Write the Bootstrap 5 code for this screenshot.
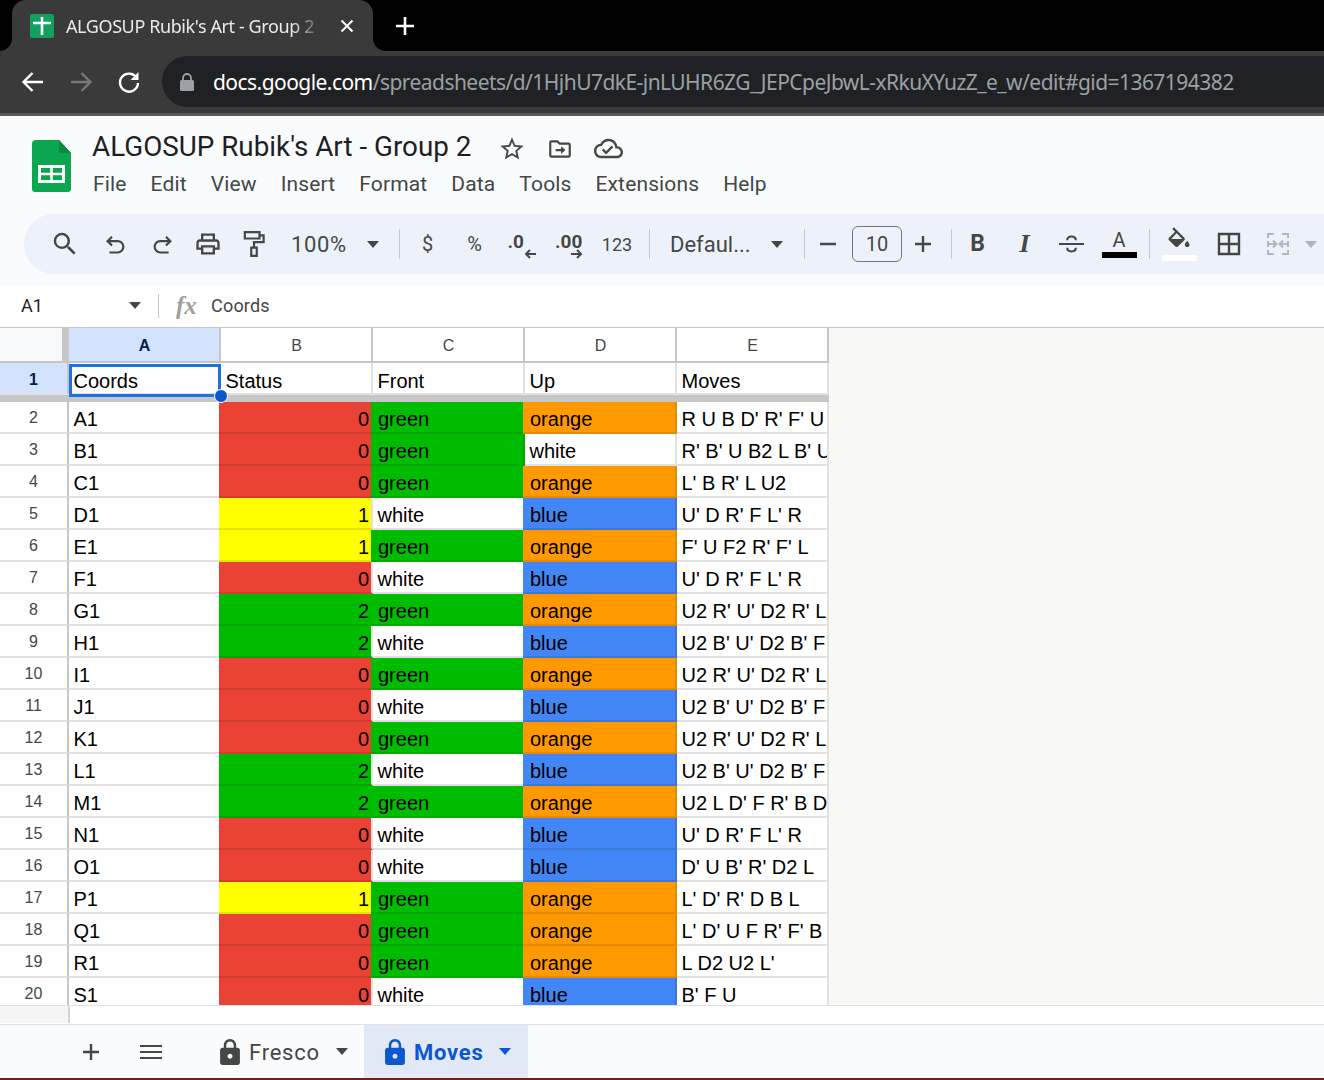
<!DOCTYPE html>
<html lang="en">
<head>
  <meta charset="UTF-8" />
  <title>ALGOSUP Rubik's Art - Group 2</title>
  <link href="https://cdn.jsdelivr.net/npm/bootstrap@5.3.0/dist/css/bootstrap.min.css" rel="stylesheet" />
  <style>
    html, body { height: 1080px; overflow: hidden; background: #fff; }
    body { font-family: Roboto, "Liberation Sans", sans-serif; color: #444746; }

    /* browser chrome */
    .tab-strip { height: 51px; background: #000; padding-left: 12px; }
    .chrome-tab { width: 361px; height: 51px; background: #3a3a3a; border-radius: 14px 14px 0 0; padding-left: 18px; position: relative; }
    .chrome-tab::before, .chrome-tab::after { content: ""; position: absolute; bottom: 0; width: 12px; height: 12px; }
    .chrome-tab::before { left: -12px; background: radial-gradient(circle at 0 0, #000 11.5px, #3a3a3a 12px); }
    .chrome-tab::after { right: -12px; background: radial-gradient(circle at 100% 0, #000 11.5px, #3a3a3a 12px); }
    .tab-title { width: 250px; margin-left: 12px; font: 18px "Noto Sans", sans-serif; letter-spacing: -.4px; color: #e8eaed; white-space: nowrap; overflow: hidden; -webkit-mask-image: linear-gradient(to right, #000 90%, rgba(0, 0, 0, .25) 100%); }
    .tab-close { margin-left: 24px; }
    .tab-plus { margin-left: 23px; }
    .addr-row { height: 65px; background: #3a3a3a; border-bottom: 3px solid #5a5a5a; padding-left: 20px; }
    .nav-ico { width: 48px; }
    .addr-pill { margin-left: -2px; flex: 1; height: 51px; margin-top: -1px; background: #202124; border-radius: 26px 0 0 26px; padding-left: 18px; font: 21px "Noto Sans", sans-serif; letter-spacing: -.55px; white-space: nowrap; overflow: hidden; color: #9aa0a6; }
    .addr-host { color: #fff; }
    .addr-lock { margin-right: 19px; flex: none; }

    /* docs header */
    .app-head { height: 170px; background: #f9fbfd; }
    .title-row { height: 98px; padding-left: 32px; padding-top: 24px; }
    .doc-logo { flex: none; margin-right: 21px; }
    .title-block { margin-top: -10px; }
    .doc-title { font-size: 27.8px; line-height: 34px; color: #1f1f1f; height: 34px; }
    .doc-icons { margin-left: 27px; gap: 21px; padding-top: 3px; }
    .menu-row { gap: 24px; font-size: 21px; line-height: 28px; color: #444746; margin-top: 6px; margin-left: 1px; letter-spacing: .14px; }
    .tool-pill { margin-left: 24px; height: 60px; background: #edf2fa; border-radius: 30px 0 0 30px; padding-left: 17px; overflow: hidden; white-space: nowrap; font-size: 22px; }
    .tb { height: 60px; flex: none; }
    .w34 { width: 34px; } .w47 { width: 47px; } .w48 { width: 48px; } .w46 { width: 46px; }
    .tb-sep { width: 1px; height: 30px; background: #c7c7c7; flex: none; }
    .tb-zoom { width: 122px; padding-left: 14px; letter-spacing: .6px; }
    .tb-font { width: 148px; padding-left: 14px; margin-left: 6px; }
    .caret-down { width: 0; height: 0; border-left: 6.5px solid transparent; border-right: 6.5px solid transparent; border-top: 7px solid currentColor; flex: none; }
    .tb-zoom .caret-down { margin-left: 20px; }
    .tb-font .caret-down { margin-left: 20px; }
    .size-box { width: 50px; height: 36px; border: 1px solid #747775; border-radius: 6px; flex: none; font-size: 20px; }
    .t-sym { font-size: 20px; }
    .t-num { font-size: 18px; }
    .t-dec { font-size: 19px; font-weight: 700; line-height: 15px; }
    .dec-stack { line-height: 1; padding-top: 4px; }
    .t-bold { font-size: 23px; font-weight: 700; }
    .t-ital { font: italic 700 26px "Liberation Serif", serif; }
    .t-color { font-size: 20px; line-height: 18px; }
    .swatch-bar { width: 35px; height: 6px; margin-top: 3px; }
    .bar-black { background: #000; }
    .bar-white { background: #fff; }
    .mg2 { margin-left: 2px; } .mg5 { margin-left: 5px; } .mg6 { margin-left: 6px; } .mg7 { margin-left: 7px; } .mg11 { margin-left: 11px; }
    .nudge { padding-top: 2px; }

    /* formula bar */
    .fx-row { height: 41px; background: #fff; padding-left: 21px; font-size: 18px; color: #1f1f1f; }
    .fx-row > * { margin-top: -2px; }
    .name-box { width: 108px; }
    .fx-caret { color: #444746; margin-right: 17px; }
    .fx-sep { width: 1px; height: 24px; background: #c7c7c7; margin-right: 17px; }
    .fx-mark { font: italic 700 25px "Liberation Serif", serif; color: #a0a0a0; width: 35px; }
    .fx-text { color: #444746; letter-spacing: .2px; }

    /* sheet */
    .sheet-wrap { height: 678px; background: #f8f9f6; position: relative; overflow: hidden; border-top: 1px solid #c4c7c5; }
    .sheet-grid { display: grid; grid-template-columns: 69px repeat(5, 152px); grid-template-rows: 35px 32px 7px repeat(19, 32px); width: 829px; font-family: "Liberation Sans", Arial, sans-serif; font-size: 20px; color: #000; background: #fff; }
    .cell { border-right: 2px solid #e1e1e1; border-bottom: 2px solid #e1e1e1; padding: 3px 5px 0 4.5px; line-height: 29px; white-space: nowrap; overflow: hidden; }
    .head-cell { padding-top: 4px; }
    .col-h { border-color: #c4c7c5; font-size: 16px; color: #444746; display: flex; align-items: center; justify-content: center; padding: 2px 0 0 1px; }
    .col-h.on { background: #d3e3fd; color: #041e49; font-weight: 700; }
    .corner { background: #f8f9fa; border-bottom: 2px solid #c4c7c5; border-right: 7px solid #c7c7c7; }
    .row-h { border-color: #c4c7c5; border-bottom-color: #e1e1e1; font-size: 16px; color: #444746; padding: 1px 0 0 0; text-align: center; line-height: 29px; }
    .row-h.on { background: #d3e3fd; color: #041e49; font-weight: 700; padding-top: 2px; }
    .freeze { grid-column: 1 / 7; background: #c7c7c7; }
    .fill { margin-left: -2px; padding-left: 7px; border-color: rgba(0, 0, 0, .1); position: relative; }
    .num-cell { text-align: right; padding-right: 2px; border-right-color: #e1e1e1; }
    .c-red { background: #ea4335; }
    .c-green { background: #00bc00; }
    .c-yellow { background: #ffff00; }
    .c-orange { background: #ff9900; }
    .c-blue { background: #4285f4; }
    .sel-box { position: absolute; left: 69px; top: 36px; width: 152px; height: 33px; border: 3px solid #1a73e8; pointer-events: none; }
    .sel-dot { position: absolute; left: 214px; top: 61px; width: 14px; height: 14px; border-radius: 50%; background: #0b57d0; border: 1px solid #fff; }

    /* bottom */
    .pad-row { height: 19px; background: #fff; border-top: 1px solid #e1e1e1; }
    .pad-corner { width: 70px; height: 17px; background: #f5f5f5; border-right: 2px solid #d5d5d5; }
    .sheet-tabs { height: 54px; background: #f9fbfd; border-top: 1px solid #e1e3e1; font-size: 22px; letter-spacing: .75px; padding-left: 80px; }
    .s-menu { margin-left: 38px; }
    .s-tab { height: 53px; }
    .s-tab span { padding-top: 2px; }
    .tab-fresco { width: 202px; padding-left: 58px; color: #444746; }
    .tab-moves { width: 164px; padding-left: 21px; background: #e1e9f7; color: #0b57d0; font-weight: 700; }
    .s-tab svg { margin-right: 9px; flex: none; }
    .s-tab .caret-down { margin-left: 16px; padding: 0; }
    .foot-line { height: 2px; background: #7c1a1a; }
  </style>
</head>
<body>
  <div class="tab-strip d-flex align-items-start">
    <div class="chrome-tab d-flex align-items-center">
      <svg width="24" height="24" viewBox="0 0 24 24"><rect width="24" height="24" rx="2" fill="#12a05c"/><path d="M3 9h18M12 3v18" stroke="#fff" stroke-width="2.600" fill="none"/></svg>
      <div class="tab-title">ALGOSUP Rubik's Art - Group 2</div>
      <svg class="tab-close" width="14" height="14" viewBox="0 0 14 14"><path d="M1.500 1.500l11 11M12.500 1.500l-11 11" stroke="#fff" stroke-width="2"/></svg>
    </div>
    <svg class="tab-plus align-self-center" width="18" height="18" viewBox="0 0 18 18"><path d="M9 0v18M0 9h18" stroke="#fff" stroke-width="2.600"/></svg>
  </div>

  <div class="addr-row d-flex align-items-center">
    <div class="nav-ico"><svg width="26" height="26" viewBox="0 0 26 26"><path d="M23 13H4M12.500 4L3.500 13l9 9" stroke="#fff" stroke-width="2.400" fill="none"/></svg></div>
    <div class="nav-ico"><svg width="26" height="26" viewBox="0 0 26 26"><path d="M3 13h19M13.500 4l9 9-9 9" stroke="#777" stroke-width="2.400" fill="none"/></svg></div>
    <div class="nav-ico"><svg width="26" height="26" viewBox="0 0 26 26"><path d="M21 9.500A9 9 0 1 0 22 14" stroke="#fff" stroke-width="2.400" fill="none"/><path d="M22.500 3v8h-8z" fill="#fff"/></svg></div>
    <div class="addr-pill d-flex align-items-center">
      <svg class="addr-lock" width="14" height="18" viewBox="0 0 14 18"><path d="M3 7V5a4 4 0 0 1 8 0v2" stroke="#9aa0a6" stroke-width="1.800" fill="none"/><rect y="7" width="14" height="11" rx="1.500" fill="#9aa0a6"/></svg>
      <span><span class="addr-host">docs.google.com</span>/spreadsheets/d/1HjhU7dkE-jnLUHR6ZG_JEPCpeJbwL-xRkuXYuzZ_e_w/edit#gid=1367194382</span>
    </div>
  </div>

  <div class="app-head">
    <div class="title-row d-flex align-items-start">
      <svg class="doc-logo" width="39" height="52" viewBox="0 0 39 52"><path d="M4 0h23l12 13v36a3 3 0 0 1-3 3H3a3 3 0 0 1-3-3V4a4 4 0 0 1 4-4z" fill="#0ca650"/><path d="M27 0l12 13H27z" fill="#0a8a42"/><path d="M6 25h27v18H6z" fill="#fff"/><path d="M9 28h9.200v4.800H9zM20.800 28H30v4.800h-9.200zM9 35.200h9.200V40H9zM20.800 35.200H30V40h-9.200z" fill="#0ca650"/></svg>
      <div class="title-block">
        <div class="d-flex align-items-center">
          <div class="doc-title">ALGOSUP Rubik's Art - Group 2</div>
          <div class="doc-icons d-flex align-items-center">
            <svg width="28" height="28" viewBox="0 0 24 24" fill="#444746"><path d="M22 9.240l-7.190-.62L12 2 9.190 8.630 2 9.240l5.460 4.730L5.820 21 12 17.270 18.180 21l-1.630-7.030L22 9.240zM12 15.400l-3.760 2.270 1-4.280-3.320-2.880 4.380-.38L12 6.100l1.710 4.040 4.380.38-3.320 2.880 1 4.280L12 15.400z"/></svg>
            <svg width="26" height="26" viewBox="0 0 24 24" fill="#444746"><path d="M20 6h-8l-2-2H4c-1.100 0-2 .9-2 2v12c0 1.100.9 2 2 2h16c1.100 0 2-.9 2-2V8c0-1.100-.9-2-2-2zm0 12H4V6h5.200l2 2H20v10z"/><path d="M8 12h5V9.500l4 3.500-4 3.500V14H8z"/></svg>
            <svg width="29" height="29" viewBox="0 0 24 24" fill="#444746"><path d="M19.350 10.040C18.670 6.590 15.640 4 12 4 9.110 4 6.600 5.640 5.350 8.040 2.340 8.360 0 10.910 0 14c0 3.310 2.690 6 6 6h13c2.760 0 5-2.240 5-5 0-2.640-2.050-4.780-4.650-4.960zM19 18H6c-2.210 0-4-1.790-4-4 0-2.050 1.530-3.760 3.560-3.970l1.070-.11.5-.95C8.080 7.140 9.940 6 12 6c2.620 0 4.880 1.860 5.390 4.430l.3 1.500 1.530.11c1.560.1 2.780 1.410 2.780 2.960 0 1.650-1.350 3-3 3zm-9-3.820l-2.090-2.090L6.500 13.500 10 17l6.010-6.010-1.410-1.410z"/></svg>
          </div>
        </div>
        <div class="menu-row d-flex">
          <span>File</span><span>Edit</span><span>View</span><span>Insert</span><span>Format</span><span>Data</span><span>Tools</span><span>Extensions</span><span>Help</span>
        </div>
      </div>
    </div>

    <div class="tool-pill d-flex align-items-center">
      <div class="tb w48 d-flex align-items-center justify-content-center"><svg width="30" height="30" viewBox="0 0 24 24" fill="#444746"><path d="M15.500 14h-.79l-.28-.27A6.471 6.471 0 0 0 16 9.500 6.500 6.500 0 1 0 9.500 16c1.610 0 3.090-.59 4.230-1.570l.27.28v.79l5 4.990L20.490 19l-4.990-5zm-6 0C7.010 14 5 11.990 5 9.500S7.010 5 9.500 5 14 7.010 14 9.500 11.990 14 9.500 14z"/></svg></div>
      <div class="tb w48 d-flex align-items-center justify-content-center nudge"><svg class="ms-1" width="21" height="21" viewBox="0 0 24 24" fill="none" stroke="#444746" stroke-width="2.500"><path d="M8 2L3 7l5 5"/><path d="M3 7h11.500a6.500 6.500 0 0 1 0 13H5"/></svg></div>
      <div class="tb w47 d-flex align-items-center justify-content-center nudge"><svg class="ms-1" width="21" height="21" viewBox="0 0 24 24" fill="none" stroke="#444746" stroke-width="2.500"><path d="M16 2l5 5-5 5"/><path d="M21 7H9.500a6.500 6.500 0 0 0 0 13H19"/></svg></div>
      <div class="tb w47 d-flex align-items-center justify-content-center"><svg width="28" height="28" viewBox="0 0 24 24" fill="#444746"><path d="M19 8h-1V3H6v5H5c-1.660 0-3 1.340-3 3v6h4v4h12v-4h4v-6c0-1.660-1.340-3-3-3zM8 5h8v3H8V5zm8 14H8v-4h8v4zm4-4h-2v-2H6v2H4v-4c0-.55.45-1 1-1h14c.55 0 1 .45 1 1v4z"/></svg></div>
      <div class="tb w46 d-flex align-items-center justify-content-center"><svg width="22" height="28" viewBox="0 0 24 30" fill="none" stroke="#444746" stroke-width="2.400"><path d="M2 2h16v7H2zM18 5.500h4.500v7.500H12v6"/><path d="M9 19h6v9H9z"/></svg></div>
      <div class="tb tb-zoom d-flex align-items-center"><span>100%</span><span class="caret-down"></span></div>
      <div class="tb-sep"></div>
      <div class="tb w47 d-flex align-items-center justify-content-center t-sym ms-1">$</div>
      <div class="tb w47 d-flex align-items-center justify-content-center t-sym">%</div>
      <div class="tb w47 d-flex align-items-center justify-content-center"><div class="dec-stack d-flex flex-column"><span class="t-dec">.0</span><svg class="ms-3" width="12" height="10" viewBox="0 0 12 10"><path d="M12 5H3M6 1L2 5l4 4" stroke="#444746" stroke-width="2" fill="none"/></svg></div></div>
      <div class="tb w48 d-flex align-items-center justify-content-center"><div class="dec-stack d-flex flex-column"><span class="t-dec">.00</span><svg class="ms-3" width="12" height="10" viewBox="0 0 12 10"><path d="M0 5h9M6 1l4 4-4 4" stroke="#444746" stroke-width="2" fill="none"/></svg></div></div>
      <div class="tb w48 d-flex align-items-center justify-content-center t-num">123</div>
      <div class="tb-sep ms-2"></div>
      <div class="tb tb-font d-flex align-items-center"><span>Defaul...</span><span class="caret-down"></span></div>
      <div class="tb-sep"></div>
      <div class="tb w34 d-flex align-items-center justify-content-center mg6"><svg width="16" height="16" viewBox="0 0 16 16"><path d="M0 8h16" stroke="#444746" stroke-width="2.400"/></svg></div>
      <div class="size-box d-flex align-items-center justify-content-center mg7">10</div>
      <div class="tb w34 d-flex align-items-center justify-content-center ms-1"><svg width="16" height="16" viewBox="0 0 16 16"><path d="M0 8h16M8 0v16" stroke="#444746" stroke-width="2.400"/></svg></div>
      <div class="tb-sep mg11"></div>
      <div class="tb w47 d-flex align-items-center justify-content-center t-bold mg2">B</div>
      <div class="tb w47 d-flex align-items-center justify-content-center t-ital">I</div>
      <div class="tb w47 d-flex align-items-center justify-content-center"><svg width="25" height="24" viewBox="0 0 26 24" fill="none" stroke="#444746" stroke-width="2.200"><path d="M0 12h26"/><path d="M8.500 8c0-5 9-5 9 0"/><path d="M8.500 16c0 5 9 5 9 0"/></svg></div>
      <div class="tb w48 d-flex flex-column align-items-center justify-content-center"><span class="t-color">A</span><span class="swatch-bar bar-black"></span></div>
      <div class="tb-sep mg6"></div>
      <div class="tb w48 d-flex flex-column align-items-center justify-content-center mg5"><svg width="28" height="25" viewBox="0 0 24 21" fill="#444746"><path fill-rule="evenodd" d="M16.560 8.940L7.620 0 6.210 1.410l2.380 2.380-5.150 5.150c-.59.59-.59 1.540 0 2.120l5.500 5.500c.29.29.68.44 1.060.44s.77-.15 1.060-.44l5.500-5.500c.59-.58.59-1.530 0-2.120zM5.210 10L10 5.210 14.790 10H5.210z"/><path d="M19 11.500s-2 2.170-2 3.500c0 1.100.9 2 2 2s2-.9 2-2c0-1.330-2-3.500-2-3.500z"/></svg><span class="swatch-bar bar-white"></span></div>
      <div class="tb w48 d-flex align-items-center justify-content-center mg2"><svg width="24" height="24" viewBox="0 0 24 24" fill="none" stroke="#444746" stroke-width="2.400"><path d="M2 2h20v20H2zM12 2v20M2 12h20"/></svg></div>
      <div class="tb w46 d-flex align-items-center justify-content-center mg2"><svg width="24" height="24" viewBox="0 0 24 24" fill="none" stroke="#b4b7b9" stroke-width="2"><path d="M8 2H2v4M16 2h6v4M8 22H2v-4M16 22h6v-4M2 9v6M22 9v6M3 12h7M7 8.500l3.500 3.500L7 15.500M21 12h-7M17 8.500L13.500 12l3.500 3.500"/></svg></div>
      <span class="caret-down text-secondary opacity-50 ms-1"></span>
      <div class="tb-sep ms-2"></div>
    </div>
  </div>

  <div class="fx-row d-flex align-items-center">
    <div class="name-box">A1</div>
    <span class="caret-down fx-caret"></span>
    <div class="fx-sep"></div>
    <div class="fx-mark">fx</div>
    <div class="fx-text">Coords</div>
  </div>

  <div class="sheet-wrap">
    <div class="sheet-grid" id="sheetGrid"></div>
    <div class="sel-box"></div>
    <div class="sel-dot"></div>
  </div>

  <div class="pad-row"><div class="pad-corner"></div></div>

  <div class="sheet-tabs d-flex align-items-center">
    <svg width="22" height="22" viewBox="0 0 22 22"><path d="M11 3v16M3 11h16" stroke="#444746" stroke-width="2.400"/></svg>
    <svg class="s-menu" width="22" height="16" viewBox="0 0 22 16"><path d="M0 2h22M0 8h22M0 14h22" stroke="#444746" stroke-width="2.200"/></svg>
    <div class="s-tab tab-fresco d-flex align-items-center">
      <svg width="20" height="26" viewBox="4 1 16 21" fill="#444746"><path d="M18 8h-1V6c0-2.760-2.240-5-5-5S7 3.240 7 6v2H6c-1.100 0-2 .9-2 2v10c0 1.100.9 2 2 2h12c1.100 0 2-.9 2-2V10c0-1.100-.9-2-2-2zM9 6c0-1.660 1.340-3 3-3s3 1.340 3 3v2H9V6zm3 11c-1.100 0-2-.9-2-2s.9-2 2-2 2 .9 2 2-.9 2-2 2z"/></svg>
      <span>Fresco</span><span class="caret-down"></span>
    </div>
    <div class="s-tab tab-moves d-flex align-items-center">
      <svg width="20" height="26" viewBox="4 1 16 21" fill="#0b57d0"><path d="M18 8h-1V6c0-2.760-2.240-5-5-5S7 3.240 7 6v2H6c-1.100 0-2 .9-2 2v10c0 1.100.9 2 2 2h12c1.100 0 2-.9 2-2V10c0-1.100-.9-2-2-2zM9 6c0-1.660 1.340-3 3-3s3 1.340 3 3v2H9V6zm3 11c-1.100 0-2-.9-2-2s.9-2 2-2 2 .9 2 2-.9 2-2 2z"/></svg>
      <span>Moves</span><span class="caret-down"></span>
    </div>
  </div>
  <div class="foot-line"></div>

  <script src="https://cdn.jsdelivr.net/npm/bootstrap@5.3.0/dist/js/bootstrap.bundle.min.js"></script>
  <script>
    const rows = [
      ["A1", 0, "green", "orange", "R U B D' R' F' U"],
      ["B1", 0, "green", "white", "R' B' U B2 L B' U"],
      ["C1", 0, "green", "orange", "L' B R' L U2"],
      ["D1", 1, "white", "blue", "U' D R' F L' R"],
      ["E1", 1, "green", "orange", "F' U F2 R' F' L"],
      ["F1", 0, "white", "blue", "U' D R' F L' R"],
      ["G1", 2, "green", "orange", "U2 R' U' D2 R' L"],
      ["H1", 2, "white", "blue", "U2 B' U' D2 B' F"],
      ["I1", 0, "green", "orange", "U2 R' U' D2 R' L"],
      ["J1", 0, "white", "blue", "U2 B' U' D2 B' F"],
      ["K1", 0, "green", "orange", "U2 R' U' D2 R' L"],
      ["L1", 2, "white", "blue", "U2 B' U' D2 B' F"],
      ["M1", 2, "green", "orange", "U2 L D' F R' B D"],
      ["N1", 0, "white", "blue", "U' D R' F L' R"],
      ["O1", 0, "white", "blue", "D' U B' R' D2 L"],
      ["P1", 1, "green", "orange", "L' D' R' D B L"],
      ["Q1", 0, "green", "orange", "L' D' U F R' F' B"],
      ["R1", 0, "green", "orange", "L D2 U2 L'"],
      ["S1", 0, "white", "blue", "B' F U"],
    ];
    const statusColor = ["c-red", "c-yellow", "c-green"];

    function cell(cls, text) {
      return `<div class="${cls}">${text}</div>`;
    }
    function colourCell(name) {
      if (name === "white") return cell("cell", name);
      return cell(`cell fill c-${name}`, name);
    }

    let html = cell("corner", "");
    ["A", "B", "C", "D", "E"].forEach((c, i) => {
      html += cell(i === 0 ? "cell col-h on" : "cell col-h", c);
    });
    html += cell("cell row-h on", "1");
    ["Coords", "Status", "Front", "Up", "Moves"].forEach((t) => {
      html += cell("cell head-cell", t);
    });
    html += cell("freeze", "");
    rows.forEach((r, i) => {
      html += cell("cell row-h", i + 2);
      html += cell("cell", r[0]);
      html += cell(`cell fill num-cell ${statusColor[r[1]]}`, r[1]);
      html += colourCell(r[2]);
      html += colourCell(r[3]);
      html += cell("cell", r[4]);
    });
    document.getElementById("sheetGrid").innerHTML = html;
  </script>
</body>
</html>
